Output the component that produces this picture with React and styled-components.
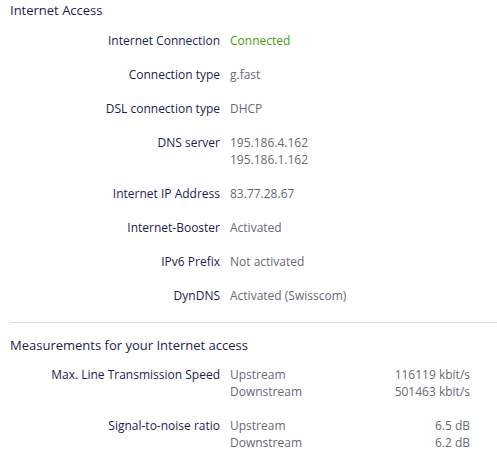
import React from "react"
import styled, { createGlobalStyle } from "styled-components"

const GlobalStyle = createGlobalStyle`
  body {
    margin: 0;
    background: #ffffff;
    font-family: "Open Sans", "Noto Sans", sans-serif;
  }
`

const Page = styled.div`
  width: 497px;
  padding-left: 10px;
  box-sizing: border-box;
`

const Title = styled.h2`
  margin: 0;
  font-size: 13px;
  font-weight: 400;
  line-height: 20px;
  color: #1b1d4f;
`

const List = styled.div`
  display: grid;
  grid-template-columns: 210px 1fr;
  column-gap: 10px;
  row-gap: 17px;
  margin-top: ${props => props.top}px;
  font-size: 12px;
  line-height: 17px;
`

const Label = styled.div`
  text-align: right;
  color: #1b1d4f;
`

const Value = styled.div`
  color: ${props => props.ok ? "#47a00c" : "#666a75"};
`

const Measure = styled.div`
  display: grid;
  grid-template-columns: 1fr auto;
  width: 240px;
  color: #666a75;
`

const Num = styled.span`
  text-align: right;
`

const Divider = styled.hr`
  margin: 18px 0 12px;
  border: none;
  border-top: 1px solid #dcdcdc;
`

const access = [
  ["Internet Connection", ["Connected"], true],
  ["Connection type", ["g.fast"]],
  ["DSL connection type", ["DHCP"]],
  ["DNS server", ["195.186.4.162", "195.186.1.162"]],
  ["Internet IP Address", ["83.77.28.67"]],
  ["Internet-Booster", ["Activated"]],
  ["IPv6 Prefix", ["Not activated"]],
  ["DynDNS", ["Activated (Swisscom)"]],
]

const measures = [
  ["Max. Line Transmission Speed", "116119 kbit/s", "501463 kbit/s"],
  ["Signal-to-noise ratio", "6.5 dB", "6.2 dB"],
]

export default function App() {
  return (
    <Page>
      <GlobalStyle />
      <Title>Internet Access</Title>
      <List top={11.5}>
        {access.map(([label, values, ok]) => (
          <React.Fragment key={label}>
            <Label>{label}</Label>
            <Value ok={ok}>
              {values.map(v => <div key={v}>{v}</div>)}
            </Value>
          </React.Fragment>
        ))}
      </List>
      <Divider />
      <Title>Measurements for your Internet access</Title>
      <List top={11.5}>
        {measures.map(([label, up, down]) => (
          <React.Fragment key={label}>
            <Label>{label}</Label>
            <Measure>
              <span>Upstream</span><Num>{up}</Num>
              <span>Downstream</span><Num>{down}</Num>
            </Measure>
          </React.Fragment>
        ))}
      </List>
    </Page>
  )
}
